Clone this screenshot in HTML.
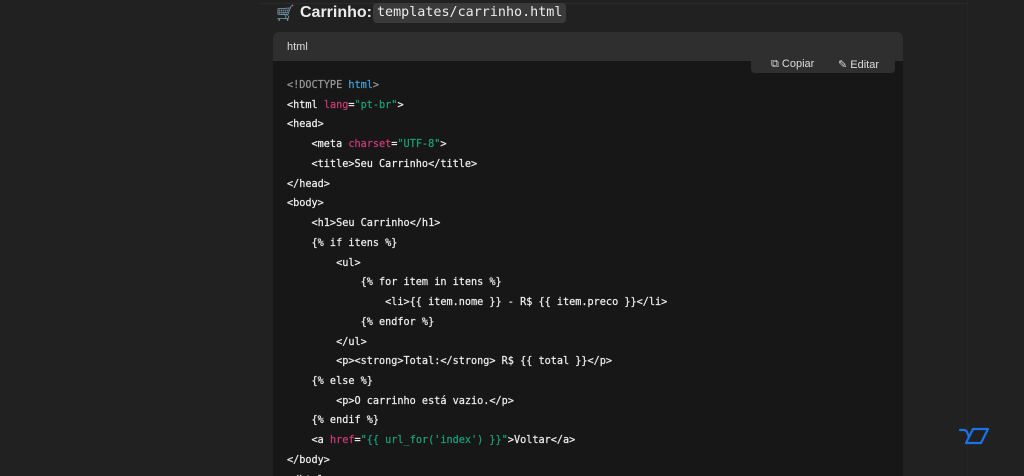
<!DOCTYPE html>
<html style="height:476px;overflow:hidden"><head><meta charset="utf-8"><style>
body{margin:0;background:#212121;width:1024px;height:476px;overflow:hidden;font-family:"Liberation Sans",sans-serif;color:#ececec;position:relative}
.topline{position:absolute;left:260px;top:3px;width:707px;height:1px;background:#2a2a2a}
.rline{position:absolute;left:967px;top:0;width:1px;height:476px;background:#262626}
.cart{position:absolute;left:276px;top:4px;font-size:15px;color:#9aa4c0}
.title{position:absolute;left:300px;top:1px;font-size:16px;font-weight:bold;line-height:24px;white-space:nowrap}
.title code{position:absolute;left:73px;top:2px;line-height:20px;font-family:"DejaVu Sans Mono",monospace;font-weight:normal;font-size:13.4px;background:#3a3a3a;border-radius:4px;padding:0 4px}
.block{position:absolute;left:273px;top:32px;width:630px;height:444px;background:#171717;border-radius:6px 6px 0 0;overflow:hidden}
.hdr{height:29px;background:#2f2f2f;font-size:11px;line-height:31px;padding-left:14px;color:#ddd}
.tools{position:absolute;left:751px;top:50px;width:144px;height:23px;background:#2f2f2f;border-radius:0 0 4px 4px;font-size:11px;color:#ddd}
.tools span{position:absolute;top:8px}
pre{margin:0;position:absolute;left:14px;top:44px;font-family:"DejaVu Sans Mono",monospace;font-size:10.2px;line-height:19.74px;color:#f0f0f0;-webkit-text-stroke:0.2px #f0f0f0}
.g{color:#999;-webkit-text-stroke:0.2px #999}.b{color:#4a9fd6;-webkit-text-stroke:0.2px #4a9fd6}.r{color:#d03b78;-webkit-text-stroke:0.2px #d03b78}.s{color:#1aa37a;-webkit-text-stroke:0.2px #1aa37a}
</style></head><body>
<div class="topline"></div><div class="rline"></div>
<div class="cart">🛒</div>
<div class="title">Carrinho: <code>templates/carrinho.html</code></div>
<div class="block"><div class="hdr">html</div>
<pre><span class="g">&lt;!DOCTYPE</span> <span class="b">html</span><span class="g">&gt;</span>
&lt;html <span class="r">lang</span>=<span class="s">"pt-br"</span>&gt;
&lt;head&gt;
    &lt;meta <span class="r">charset</span>=<span class="s">"UTF-8"</span>&gt;
    &lt;title&gt;Seu Carrinho&lt;/title&gt;
&lt;/head&gt;
&lt;body&gt;
    &lt;h1&gt;Seu Carrinho&lt;/h1&gt;
    {% if itens %}
        &lt;ul&gt;
            {% for item in itens %}
                &lt;li&gt;{{ item.nome }} - R$ {{ item.preco }}&lt;/li&gt;
            {% endfor %}
        &lt;/ul&gt;
        &lt;p&gt;&lt;strong&gt;Total:&lt;/strong&gt; R$ {{ total }}&lt;/p&gt;
    {% else %}
        &lt;p&gt;O carrinho está vazio.&lt;/p&gt;
    {% endif %}
    &lt;a <span class="r">href</span>=<span class="s">"{{ url_for('index') }}"</span>&gt;Voltar&lt;/a&gt;
&lt;/body&gt;
&lt;/html&gt;</pre></div>
<div class="tools"><span style="left:20px">⧉ Copiar</span><span style="left:87px">✎ Editar</span></div>
<svg style="position:absolute;left:950px;top:418px" width="50" height="34" viewBox="950 418 50 34"><path d="M960 430 L964 430 Q966 430 967 432 L969 437" fill="none" stroke="#1a73e8" stroke-width="2.2" stroke-linecap="round"/><path d="M973 429 L988 429 L981 443 L966 443 Z" fill="none" stroke="#1a73e8" stroke-width="2.2" stroke-linejoin="round"/></svg>
</body></html>
